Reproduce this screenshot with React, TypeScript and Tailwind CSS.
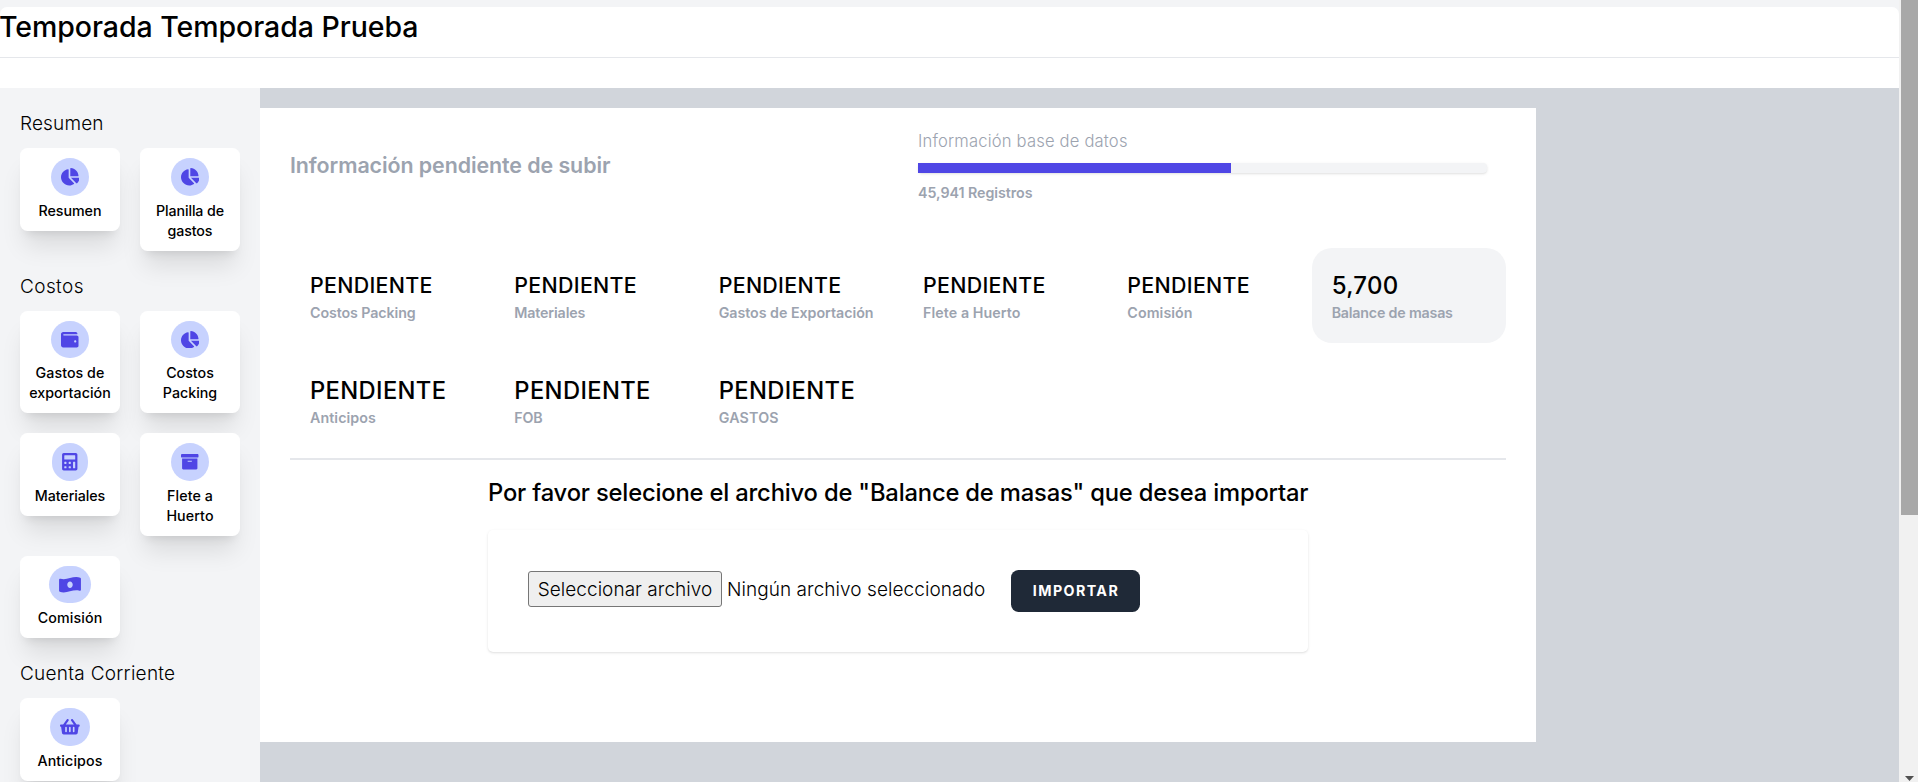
import type { IconType } from "react-icons";
import {
  FaArchive,
  FaCalculator,
  FaChartPie,
  FaMoneyBillWaveAlt,
  FaShoppingBasket,
  FaWallet,
} from "react-icons/fa";

type Tile = { lines: string[]; icon: IconType; iconWidth: string; tracking: string };
type Section = { title: string; tracking: string; tiles: Tile[] };
type Stat = { value: string; label: string; large?: boolean; active?: boolean; tracking: string };

const sections: Section[] = [
  {
    title: "Resumen",
    tracking: "tracking-[0.15px]",
    tiles: [
      { lines: ["Resumen"], icon: FaChartPie, iconWidth: "w-[18.6px]", tracking: "tracking-[-0.05px]" },
      { lines: ["Planilla de", "gastos"], icon: FaChartPie, iconWidth: "w-[18.6px]", tracking: "tracking-[-0.12px]" },
    ],
  },
  {
    title: "Costos",
    tracking: "tracking-[0.4px]",
    tiles: [
      { lines: ["Gastos de", "exportación"], icon: FaWallet, iconWidth: "w-[17.5px]", tracking: "tracking-[0.05px]" },
      { lines: ["Costos", "Packing"], icon: FaChartPie, iconWidth: "w-[18.6px]", tracking: "tracking-normal" },
      { lines: ["Materiales"], icon: FaCalculator, iconWidth: "w-[15.5px]", tracking: "tracking-[-0.08px]" },
      { lines: ["Flete a", "Huerto"], icon: FaArchive, iconWidth: "w-[17.5px]", tracking: "tracking-[0.1px]" },
      { lines: ["Comisión"], icon: FaMoneyBillWaveAlt, iconWidth: "w-[22px]", tracking: "tracking-[0.12px]" },
    ],
  },
  {
    title: "Cuenta Corriente",
    tracking: "tracking-[0.27px]",
    tiles: [
      { lines: ["Anticipos"], icon: FaShoppingBasket, iconWidth: "w-[19.7px]", tracking: "tracking-[0.12px]" },
    ],
  },
];

const stats: Stat[] = [
  { value: "PENDIENTE", label: "Costos Packing", tracking: "tracking-[-0.1px]" },
  { value: "PENDIENTE", label: "Materiales", tracking: "tracking-[-0.15px]" },
  { value: "PENDIENTE", label: "Gastos de Exportación", tracking: "tracking-[-0.03px]" },
  { value: "PENDIENTE", label: "Flete a Huerto", tracking: "tracking-[0.08px]" },
  { value: "PENDIENTE", label: "Comisión", tracking: "tracking-[0.08px]" },
  { value: "5,700", label: "Balance de masas", large: true, active: true, tracking: "tracking-[-0.2px]" },
  { value: "PENDIENTE", label: "Anticipos", large: true, tracking: "tracking-[0.08px]" },
  { value: "PENDIENTE", label: "FOB", large: true, tracking: "tracking-[-0.15px]" },
  { value: "PENDIENTE", label: "GASTOS", large: true, tracking: "tracking-[0.2px]" },
];

function TileCard({ tile }: { tile: Tile }) {
  const Icon = tile.icon;
  return (
    <a className="flex w-[100px] flex-col items-center self-start rounded-[7.5px] bg-white py-[10px] shadow-xl">
      <span className="flex h-[37.5px] items-center rounded-full bg-[#c7d2fe] px-[10px] text-[#4f46e5]">
        <Icon className={`h-[17.5px] ${tile.iconWidth}`} />
      </span>
      <span className={`mt-[5px] text-center text-[14.25px] leading-[20px] font-medium whitespace-nowrap ${tile.tracking}`}>
        {tile.lines.map((line) => (
          <span key={line} className="block">{line}</span>
        ))}
      </span>
    </a>
  );
}

function Sidebar() {
  return (
    <aside className="flex w-[260px] shrink-0 flex-col gap-5 bg-[#f3f4f6] p-5">
      {sections.map((section) => (
        <section key={section.title}>
          <h2 className={`pt-px text-[19px] leading-[30px] font-light ${section.tracking}`}>{section.title}</h2>
          <div className="mt-[9px] grid grid-cols-2 gap-5">
            {section.tiles.map((tile) => (
              <TileCard key={tile.lines.join(" ")} tile={tile} />
            ))}
          </div>
        </section>
      ))}
    </aside>
  );
}

function StatCard({ stat }: { stat: Stat }) {
  return (
    <div className={`rounded-[20px] p-5 whitespace-nowrap ${stat.active ? "bg-[#f3f4f6]" : ""}`}>
      <p
        className={`leading-[35px] font-medium ${
          stat.active
            ? "text-[24px] tracking-[0.3px]"
            : stat.large
              ? "text-[23.75px] tracking-[0.35px]"
              : "text-[21.4px] tracking-[0.3px]"
        }`}
      >
        {stat.value}
      </p>
      <p className={`text-[14.25px] leading-[20px] font-semibold text-[#9ca3af] ${stat.tracking}`}>{stat.label}</p>
    </div>
  );
}

function ImportForm() {
  return (
    <div className="mx-auto mt-[15px] w-[820px]">
      <h2 className="text-[23.75px] leading-[35px] font-medium tracking-[-0.175px] whitespace-nowrap">
        Por favor selecione el archivo de "Balance de masas" que desea importar
      </h2>
      <form className="mt-5 flex h-[122px] items-start rounded-[5px] bg-white px-10 pt-10 shadow-[0_1px_3px_rgba(0,0,0,0.1),0_1px_2px_-1px_rgba(0,0,0,0.1)]">
        <button
          type="button"
          className="mt-px h-[36px] w-[194px] rounded-[3px] border border-[#767676] bg-[#efefef] pt-px text-[19px] leading-[34px] font-light tracking-[0.04px] whitespace-nowrap"
        >
          Seleccionar archivo
        </button>
        <span className="mt-[2px] ml-[5px] w-[284px] text-[19px] leading-[36px] font-light tracking-[0.06px] whitespace-nowrap">
          Ningún archivo seleccionado
        </span>
        <button
          type="button"
          className="h-[42px] w-[129px] rounded-[7.5px] bg-[#1f2937] pl-[1px] text-[14.25px] leading-[42px] font-bold tracking-[1.4px] text-white"
        >
          IMPORTAR
        </button>
      </form>
    </div>
  );
}

function Scrollbar() {
  return (
    <div className="flex w-[19px] shrink-0 flex-col items-end justify-between bg-[#f1f1f1]">
      <div className="h-[515px] w-[17px] bg-[#a8a8a8]" />
      <svg className="mr-1 mb-px" width="9" height="5" viewBox="0 0 9 5" fill="#505050">
        <path d="M0 0H9L4.5 5Z" />
      </svg>
    </div>
  );
}

export default function App() {
  return (
    <div className="flex h-[782px] overflow-hidden bg-white font-['Inter','Liberation_Sans',sans-serif] text-black">
      <div className="flex min-w-0 flex-1 flex-col">
        <div className="bg-[#f3f4f6] pt-[7px]">
          <header className="h-[51px] rounded-t-[7px] border-b border-[#e5e7eb] bg-white">
            <h1 className="-ml-px text-[28.5px] leading-[40px] font-medium tracking-[-0.05px]">Temporada Temporada Prueba</h1>
          </header>
        </div>
        <div className="mt-[30px] flex min-h-0 flex-1">
          <Sidebar />
          <main className="flex-1 bg-[#d1d5db] pt-5">
            <div className="h-[634px] w-[1276px] bg-white px-[30px]">
              <div className="flex h-[140px]">
                <h2 className="mt-10 w-[628px] text-[21.4px] leading-[35px] font-semibold tracking-[-0.07px] text-[#9ca3af]">
                  Información pendiente de subir
                </h2>
                <div className="w-[569px] pt-[21px] text-[#9ca3af]">
                  <p className="text-[16.6px] leading-[25px] font-light tracking-[0.18px]">Información base de datos</p>
                  <div className="mt-[9px] h-[10px] rounded-[4px] bg-[#f3f4f6] shadow">
                    <div className="h-full w-[55%] bg-[#4f46e5]" />
                  </div>
                  <p className="mt-[10px] text-[14.25px] leading-[20px] font-semibold tracking-[-0.04px]">
                    45,941 Registros
                  </p>
                </div>
              </div>
              <div className="grid grid-cols-6 gap-[10px]">
                {stats.map((stat) => (
                  <StatCard key={stat.label} stat={stat} />
                ))}
              </div>
              <div className="mt-[10px] h-[2px] bg-[#e5e7eb]" />
              <ImportForm />
            </div>
          </main>
        </div>
      </div>
      <Scrollbar />
    </div>
  );
}
